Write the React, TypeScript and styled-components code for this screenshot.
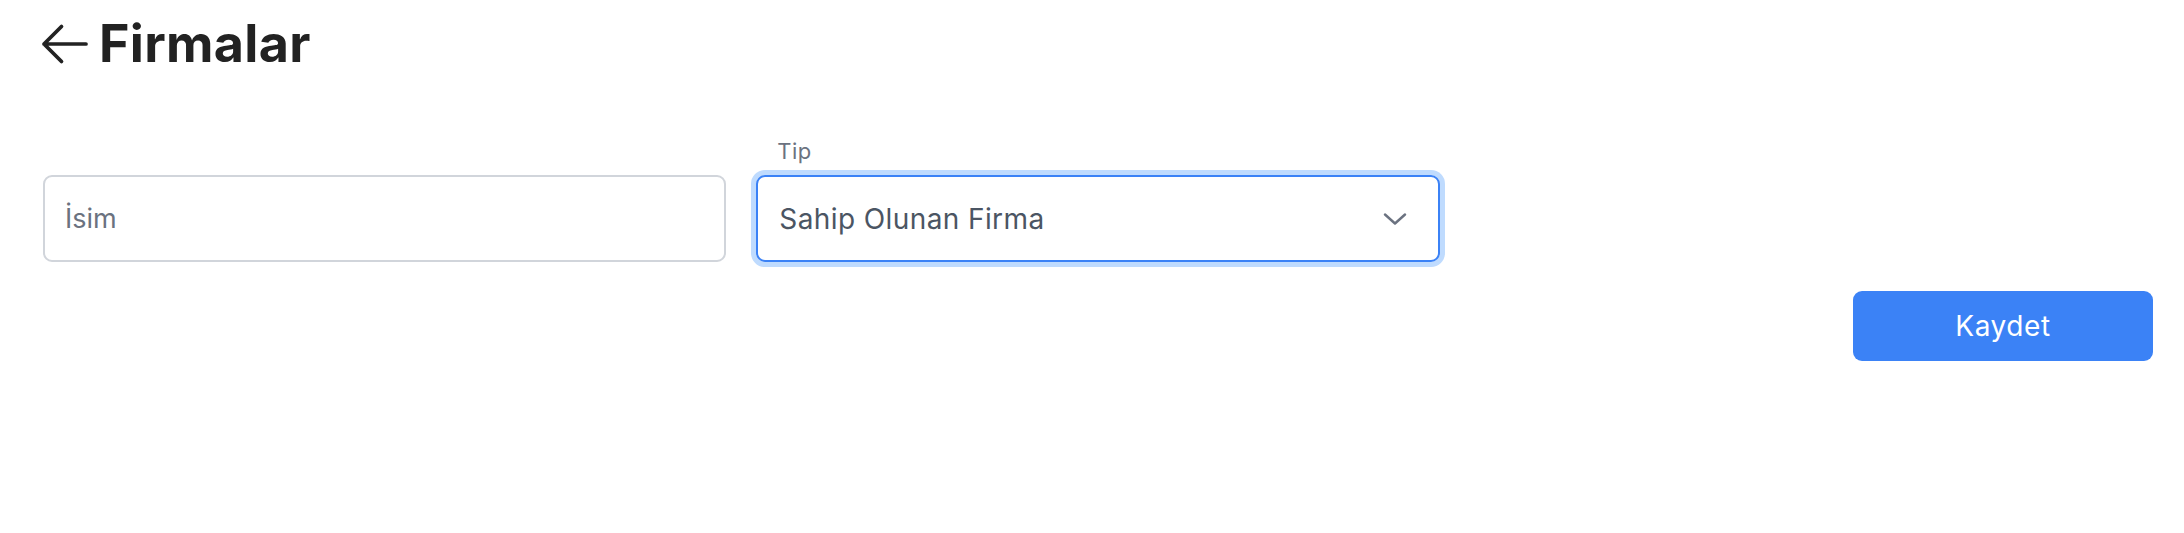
import React from "react";
import styled, { createGlobalStyle } from "styled-components";

const GlobalStyle = createGlobalStyle`
  body {
    margin: 0;
    background: #fff;
    font-family: Inter, "Noto Sans", "Liberation Sans", sans-serif;
  }
`;

export default function App() {
  return (
    <>
      <GlobalStyle />
      <Page>
        <Header>
          <BackIcon viewBox="0 0 24 24" fill="none" stroke="currentColor" strokeWidth={1.6}>
            <path strokeLinecap="round" strokeLinejoin="round" d="M10.5 19.5L3 12m0 0l7.5-7.5M3 12h18" />
          </BackIcon>
          <Title>Firmalar</Title>
        </Header>

        <Form>
          <Field>
            <TextInput placeholder="İsim" />
          </Field>
          <Field>
            <Label>Tip</Label>
            <SelectBox role="combobox" tabIndex={0}>
              <SelectValue>Sahip Olunan Firma</SelectValue>
              <Chevron viewBox="0 0 24 12" fill="none" stroke="currentColor" strokeWidth={2.4}>
                <path strokeLinecap="round" strokeLinejoin="round" d="M2 1.5l10 9 10-9" />
              </Chevron>
            </SelectBox>
          </Field>
        </Form>

        <Actions>
          <SaveButton>Kaydet</SaveButton>
        </Actions>
      </Page>
    </>
  );
}

const Page = styled.div`
  padding: 13px 31px 0 43px;
`;

const Header = styled.div`
  display: flex;
  align-items: center;
  gap: 6px;
  margin-left: -6px;
  color: #222;
`;

const BackIcon = styled.svg`
  width: 56px;
  height: 56px;
  flex-shrink: 0;
`;

const Title = styled.h1`
  margin: 0;
  font-size: 52px;
  line-height: 1.2;
  font-weight: 700;
  letter-spacing: 0.3px;
`;

const Form = styled.div`
  display: grid;
  grid-template-columns: repeat(3, 1fr);
  column-gap: 30px;
  align-items: end;
  margin-top: 60px;
`;

const Field = styled.div`
  display: flex;
  flex-direction: column;
`;

const Label = styled.label`
  font-size: 22px;
  line-height: 33px;
  color: #6b7280;
  padding-left: 21px;
  margin-bottom: 7px;
  letter-spacing: 0.5px;
`;

const TextInput = styled.input`
  box-sizing: border-box;
  height: 87px;
  width: 100%;
  border: 2px solid #d1d5db;
  border-radius: 9px;
  padding: 0 20px;
  font-family: inherit;
  font-size: 27px;
  color: #4b5563;
  outline: none;
  &::placeholder {
    color: #6b7280;
  }
`;

const SelectBox = styled.div`
  box-sizing: border-box;
  height: 87px;
  display: flex;
  align-items: center;
  justify-content: space-between;
  padding: 0 31px 0 21px;
  border: 2px solid #3b82f6;
  border-radius: 9px;
  box-shadow: 0 0 0 5px #bfdbfe;
  outline: none;
  cursor: pointer;
`;

const SelectValue = styled.span`
  font-size: 28px;
  letter-spacing: 0.4px;
  color: #4b5563;
`;

const Chevron = styled.svg`
  width: 24px;
  height: 12px;
  color: #6b7280;
`;

const Actions = styled.div`
  display: flex;
  justify-content: flex-end;
  margin-top: 29px;
`;

const SaveButton = styled.button`
  width: 300px;
  height: 70px;
  border: none;
  border-radius: 9px;
  background: #3b82f6;
  color: #fff;
  font-family: inherit;
  font-size: 28px;
  letter-spacing: 0.6px;
  cursor: pointer;
`;
